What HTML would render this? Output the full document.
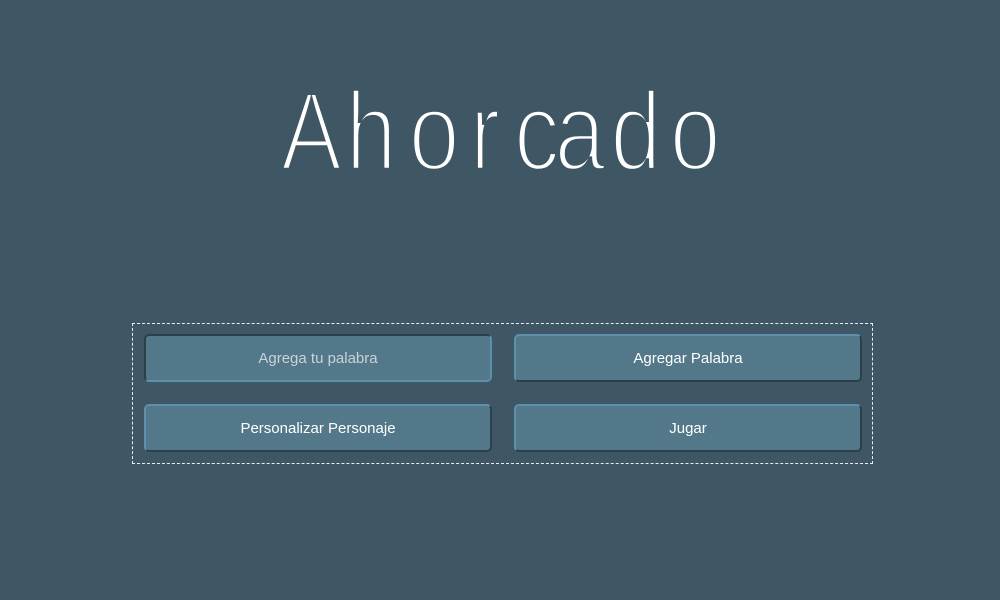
<!DOCTYPE html>
<html><head><meta charset="utf-8"><style>
html,body{margin:0;padding:0;width:1000px;height:600px;background:#3f5664;overflow:hidden;font-family:"Liberation Sans",sans-serif}
svg.t{position:absolute;left:0;top:0}
svg.t text{font-family:"Liberation Sans",sans-serif;font-size:102px;fill:#fff;stroke:#3f5664;stroke-width:4px}
.box{position:absolute;left:132px;top:323px;width:739px;height:139px;border:1px dashed #e8eef2}
.b{position:absolute;width:348px;height:48px;box-sizing:border-box;background:#527889;border-radius:5px;color:#fff;font-size:15px;display:flex;align-items:center;justify-content:center}
.in{border-top:2px solid #2c3f4a;border-left:2px solid #2c3f4a;border-bottom:2px solid #5f90ab;border-right:2px solid #5f90ab;color:#c9d3d8}
.out{border-top:2px solid #5f90ab;border-left:2px solid #5f90ab;border-bottom:2px solid #2c3f4a;border-right:2px solid #2c3f4a}
</style></head><body>
<svg class="t" width="1000" height="200"><g transform="translate(0,170) scale(0.9,1.1)">
<text x="312" y="0">A</text>
<text x="384" y="0">h</text>
<text x="454" y="0">o</text>
<text x="522" y="0">r</text>
<text x="571" y="0">c</text>
<text x="616" y="0">a</text>
<text x="678" y="0">d</text>
<text x="744" y="0">o</text>
</g></svg>
<div class="box"></div>
<div class="b in" style="left:144px;top:334px">Agrega tu palabra</div>
<div class="b out" style="left:514px;top:334px">Agregar Palabra</div>
<div class="b out" style="left:144px;top:404px">Personalizar Personaje</div>
<div class="b out" style="left:514px;top:404px">Jugar</div>
</body></html>
